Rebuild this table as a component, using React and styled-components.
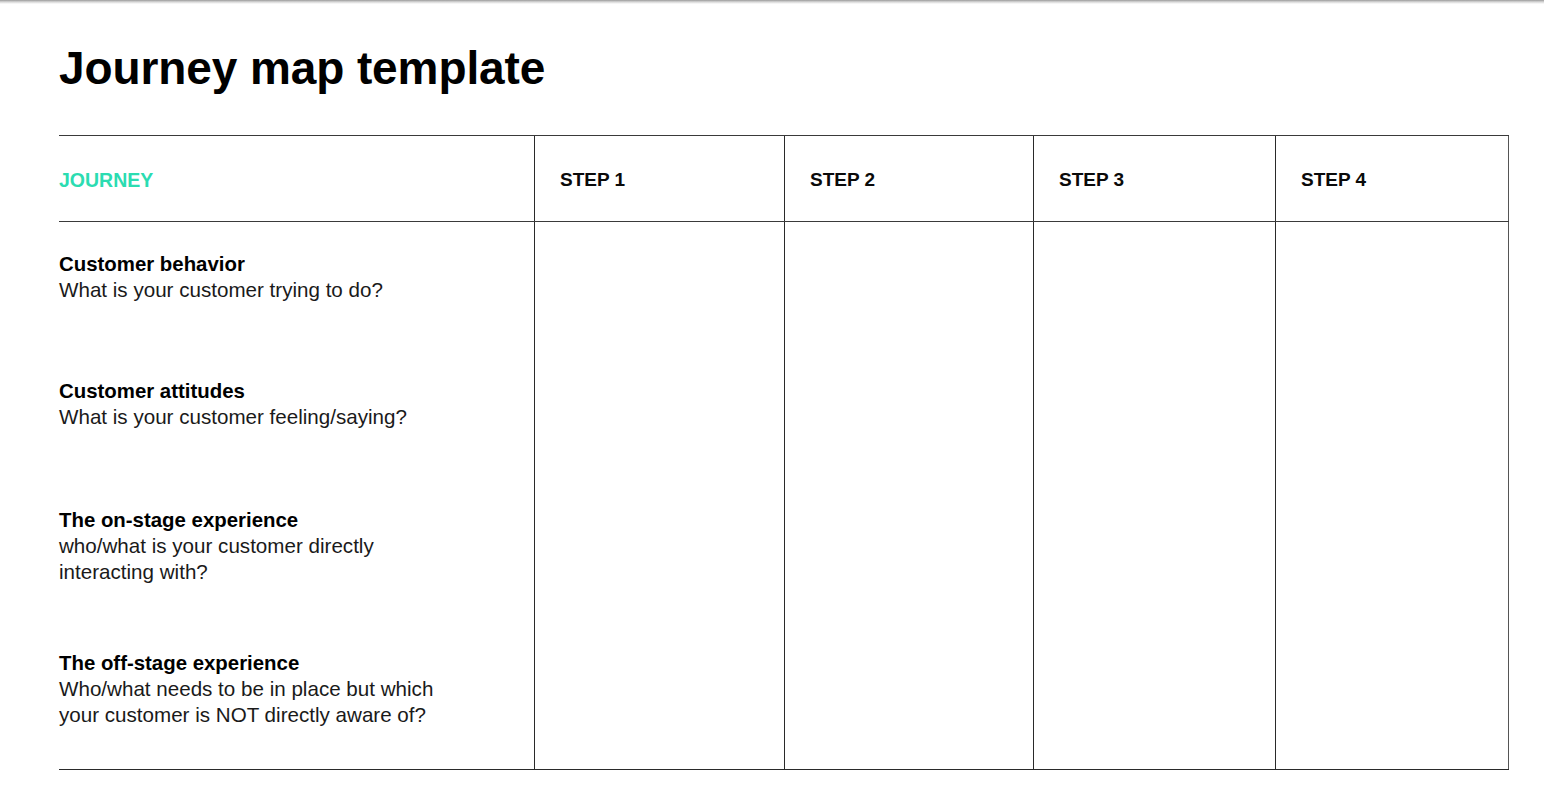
import React from 'react';
import styled, { createGlobalStyle } from 'styled-components';

const steps = ['STEP 1', 'STEP 2', 'STEP 3', 'STEP 4'];
const stepWidths = [250, 249, 242, 234];

const rows = [
	{ title: 'Customer behavior', lines: ['What is your customer trying to do?'], height: 127 },
	{ title: 'Customer attitudes', lines: ['What is your customer feeling/saying?'], height: 129 },
	{
		title: 'The on-stage experience',
		lines: ['who/what is your customer directly', 'interacting with?'],
		height: 143,
	},
	{
		title: 'The off-stage experience',
		lines: ['Who/what needs to be in place but which', 'your customer is NOT directly aware of?'],
		height: 118,
	},
];

/************************************* jsx *************************************/

const App = () => {
	return (
		<>
			<GlobalStyle />
			<TopShade />
			<Page>
				<Title>Journey map template</Title>
				<Table>
					<HeaderRow>
						<HeaderCell $width={475} $first>
							<JourneyLabel>JOURNEY</JourneyLabel>
						</HeaderCell>
						{steps.map((step, i) => (
							<HeaderCell key={step} $width={stepWidths[i]} $last={i === steps.length - 1}>
								<StepLabel>{step}</StepLabel>
							</HeaderCell>
						))}
					</HeaderRow>
					<BodyRow>
						<LabelColumn>
							{rows.map((row) => (
								<LabelBlock key={row.title} $height={row.height}>
									<RowTitle>{row.title}</RowTitle>
									{row.lines.map((line) => (
										<RowText key={line}>{line}</RowText>
									))}
								</LabelBlock>
							))}
						</LabelColumn>
						{steps.map((step, i) => (
							<StepCell key={step} $width={stepWidths[i]} $last={i === steps.length - 1} />
						))}
					</BodyRow>
				</Table>
			</Page>
		</>
	);
};

export default App;

/******************************** styled-components ********************************/

const GlobalStyle = createGlobalStyle`
	html, body {
		margin: 0;
		padding: 0;
		background: #ffffff;
	}
	body {
		font-family: "Liberation Sans", Arial, sans-serif;
		color: #111111;
	}
	* {
		box-sizing: border-box;
	}
`;

const TopShade = styled.div`
	height: 4px;
	background: linear-gradient(to bottom, #9a9a9a 0%, #d4d4d4 45%, #ffffff 100%);
`;

const Page = styled.div`
	padding: 37px 0 0 59px;
`;

const Title = styled.h1`
	margin: 0;
	font-size: 46px;
	line-height: 54px;
	font-weight: 700;
	letter-spacing: -0.1px;
	color: #000000;
`;

const Table = styled.div`
	margin-top: 40px;
	width: 1450px;
	border-top: 1px solid #3a3a3a;
	border-bottom: 1px solid #2a2a2a;
`;

const HeaderRow = styled.div`
	display: flex;
	height: 86px;
	border-bottom: 1px solid #3a3a3a;
`;

const HeaderCell = styled.div`
	width: ${(p) => p.$width}px;
	display: flex;
	align-items: center;
	padding: 3px 0 0 ${(p) => (p.$first ? 0 : 25)}px;
	border-left: ${(p) => (p.$first ? 'none' : '1px solid #2a2a2a')};
	border-right: ${(p) => (p.$last ? '1px solid #555555' : 'none')};
`;

const JourneyLabel = styled.span`
	font-size: 19.5px;
	font-weight: 700;
	color: #2bdcb1;
`;

const StepLabel = styled.span`
	font-size: 19px;
	font-weight: 700;
	color: #0a0a0a;
`;

const BodyRow = styled.div`
	display: flex;
	height: 547px;
`;

const LabelColumn = styled.div`
	width: 475px;
	padding-top: 30px;
	display: flex;
	flex-direction: column;
`;

const LabelBlock = styled.div`
	height: ${(p) => p.$height}px;
`;

const RowTitle = styled.div`
	font-size: 20.4px;
	line-height: 25px;
	font-weight: 700;
	color: #000000;
`;

const RowText = styled.div`
	font-size: 20.6px;
	line-height: 25.5px;
	font-weight: 400;
	color: #1a1a1a;
`;

const StepCell = styled.div`
	width: ${(p) => p.$width}px;
	border-left: 1px solid #2a2a2a;
	border-right: ${(p) => (p.$last ? '1px solid #555555' : 'none')};
`;
